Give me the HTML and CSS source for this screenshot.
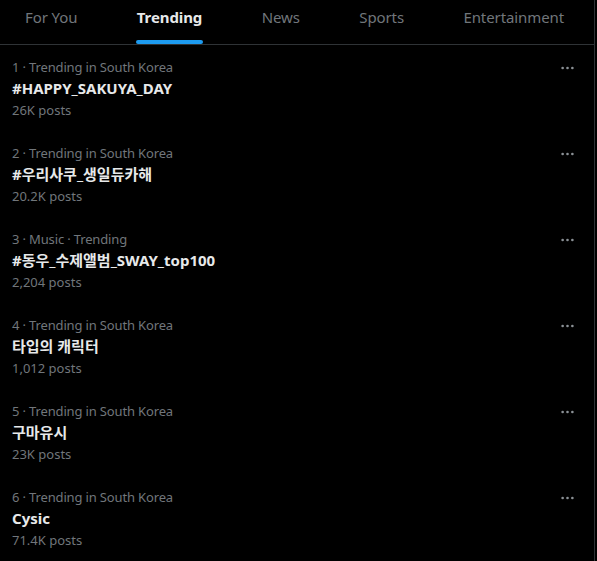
FILE: index.html
```html
<!DOCTYPE html>
<html lang="en">
<head>
<meta charset="utf-8">
<title>Trending</title>
<link rel="stylesheet" href="styles.css">
</head>
<body>
<div class="page">
  <nav class="tabs">
    <div class="tab">For You</div>
    <div class="tab active">Trending</div>
    <div class="tab">News</div>
    <div class="tab">Sports</div>
    <div class="tab">Entertainment</div>
  </nav>
  <section class="list">
    <div class="trend">
      <div class="info">
        <div class="meta">1 · Trending in South Korea</div>
        <div class="title">#HAPPY_SAKUYA_DAY</div>
        <div class="count">26K posts</div>
      </div>
      <svg class="more" viewBox="0 0 16 4"><circle cx="2" cy="2" r="1.6"/><circle cx="8" cy="2" r="1.6"/><circle cx="14" cy="2" r="1.6"/></svg>
    </div>
    <div class="trend">
      <div class="info">
        <div class="meta">2 · Trending in South Korea</div>
        <div class="title">#우리사쿠_생일듀카해</div>
        <div class="count">20.2K posts</div>
      </div>
      <svg class="more" viewBox="0 0 16 4"><circle cx="2" cy="2" r="1.6"/><circle cx="8" cy="2" r="1.6"/><circle cx="14" cy="2" r="1.6"/></svg>
    </div>
    <div class="trend">
      <div class="info">
        <div class="meta">3 · Music · Trending</div>
        <div class="title">#동우_수제앨범_SWAY_top100</div>
        <div class="count">2,204 posts</div>
      </div>
      <svg class="more" viewBox="0 0 16 4"><circle cx="2" cy="2" r="1.6"/><circle cx="8" cy="2" r="1.6"/><circle cx="14" cy="2" r="1.6"/></svg>
    </div>
    <div class="trend">
      <div class="info">
        <div class="meta">4 · Trending in South Korea</div>
        <div class="title">타입의 캐릭터</div>
        <div class="count">1,012 posts</div>
      </div>
      <svg class="more" viewBox="0 0 16 4"><circle cx="2" cy="2" r="1.6"/><circle cx="8" cy="2" r="1.6"/><circle cx="14" cy="2" r="1.6"/></svg>
    </div>
    <div class="trend">
      <div class="info">
        <div class="meta">5 · Trending in South Korea</div>
        <div class="title">구마유시</div>
        <div class="count">23K posts</div>
      </div>
      <svg class="more" viewBox="0 0 16 4"><circle cx="2" cy="2" r="1.6"/><circle cx="8" cy="2" r="1.6"/><circle cx="14" cy="2" r="1.6"/></svg>
    </div>
    <div class="trend">
      <div class="info">
        <div class="meta">6 · Trending in South Korea</div>
        <div class="title">Cysic</div>
        <div class="count">71.4K posts</div>
      </div>
      <svg class="more" viewBox="0 0 16 4"><circle cx="2" cy="2" r="1.6"/><circle cx="8" cy="2" r="1.6"/><circle cx="14" cy="2" r="1.6"/></svg>
    </div>
  </section>
</div>
</body>
</html>
```
FILE: styles.css
```css
html, body {
  margin: 0;
  padding: 0;
  background: #000;
}
body {
  font-family: "Noto Sans", "Noto Sans CJK KR", sans-serif;
  color: #e7e9ea;
}
.page {
  width: 594px;
  height: 561px;
  border-right: 1px solid #2f3336;
  overflow: hidden;
}
.tabs {
  display: flex;
  justify-content: space-between;
  height: 44px;
  border-bottom: 1px solid #2f3336;
  padding: 0 30px 0 25px;
}
.tab {
  position: relative;
  padding-top: 7px;
  font-size: 15px;
  line-height: 20px;
  color: #71767b;
  font-weight: 400;
  letter-spacing: -0.1px;
}
.tab.active {
  color: #e7e9ea;
  font-weight: 700;
}
.tab.active::after {
  content: "";
  position: absolute;
  bottom: 0;
  left: -1px;
  right: -1px;
  height: 4px;
  border-radius: 2px;
  background: #1d9bf0;
}
.trend {
  display: flex;
  justify-content: space-between;
  align-items: flex-start;
  padding: 14px 20px 13px 12px;
  height: 59px;
}
.meta {
  font-size: 13px;
  line-height: 16px;
  color: #71767b;
  letter-spacing: -0.15px;
}
.title {
  margin-top: 3px;
  font-size: 15px;
  line-height: 20px;
  font-weight: 700;
  color: #e7e9ea;
}
.count {
  margin-top: 4px;
  font-size: 13px;
  line-height: 16px;
  color: #71767b;
}
.more {
  width: 13px;
  height: 4px;
  margin-top: 7px;
  fill: #8b9196;
}
```
